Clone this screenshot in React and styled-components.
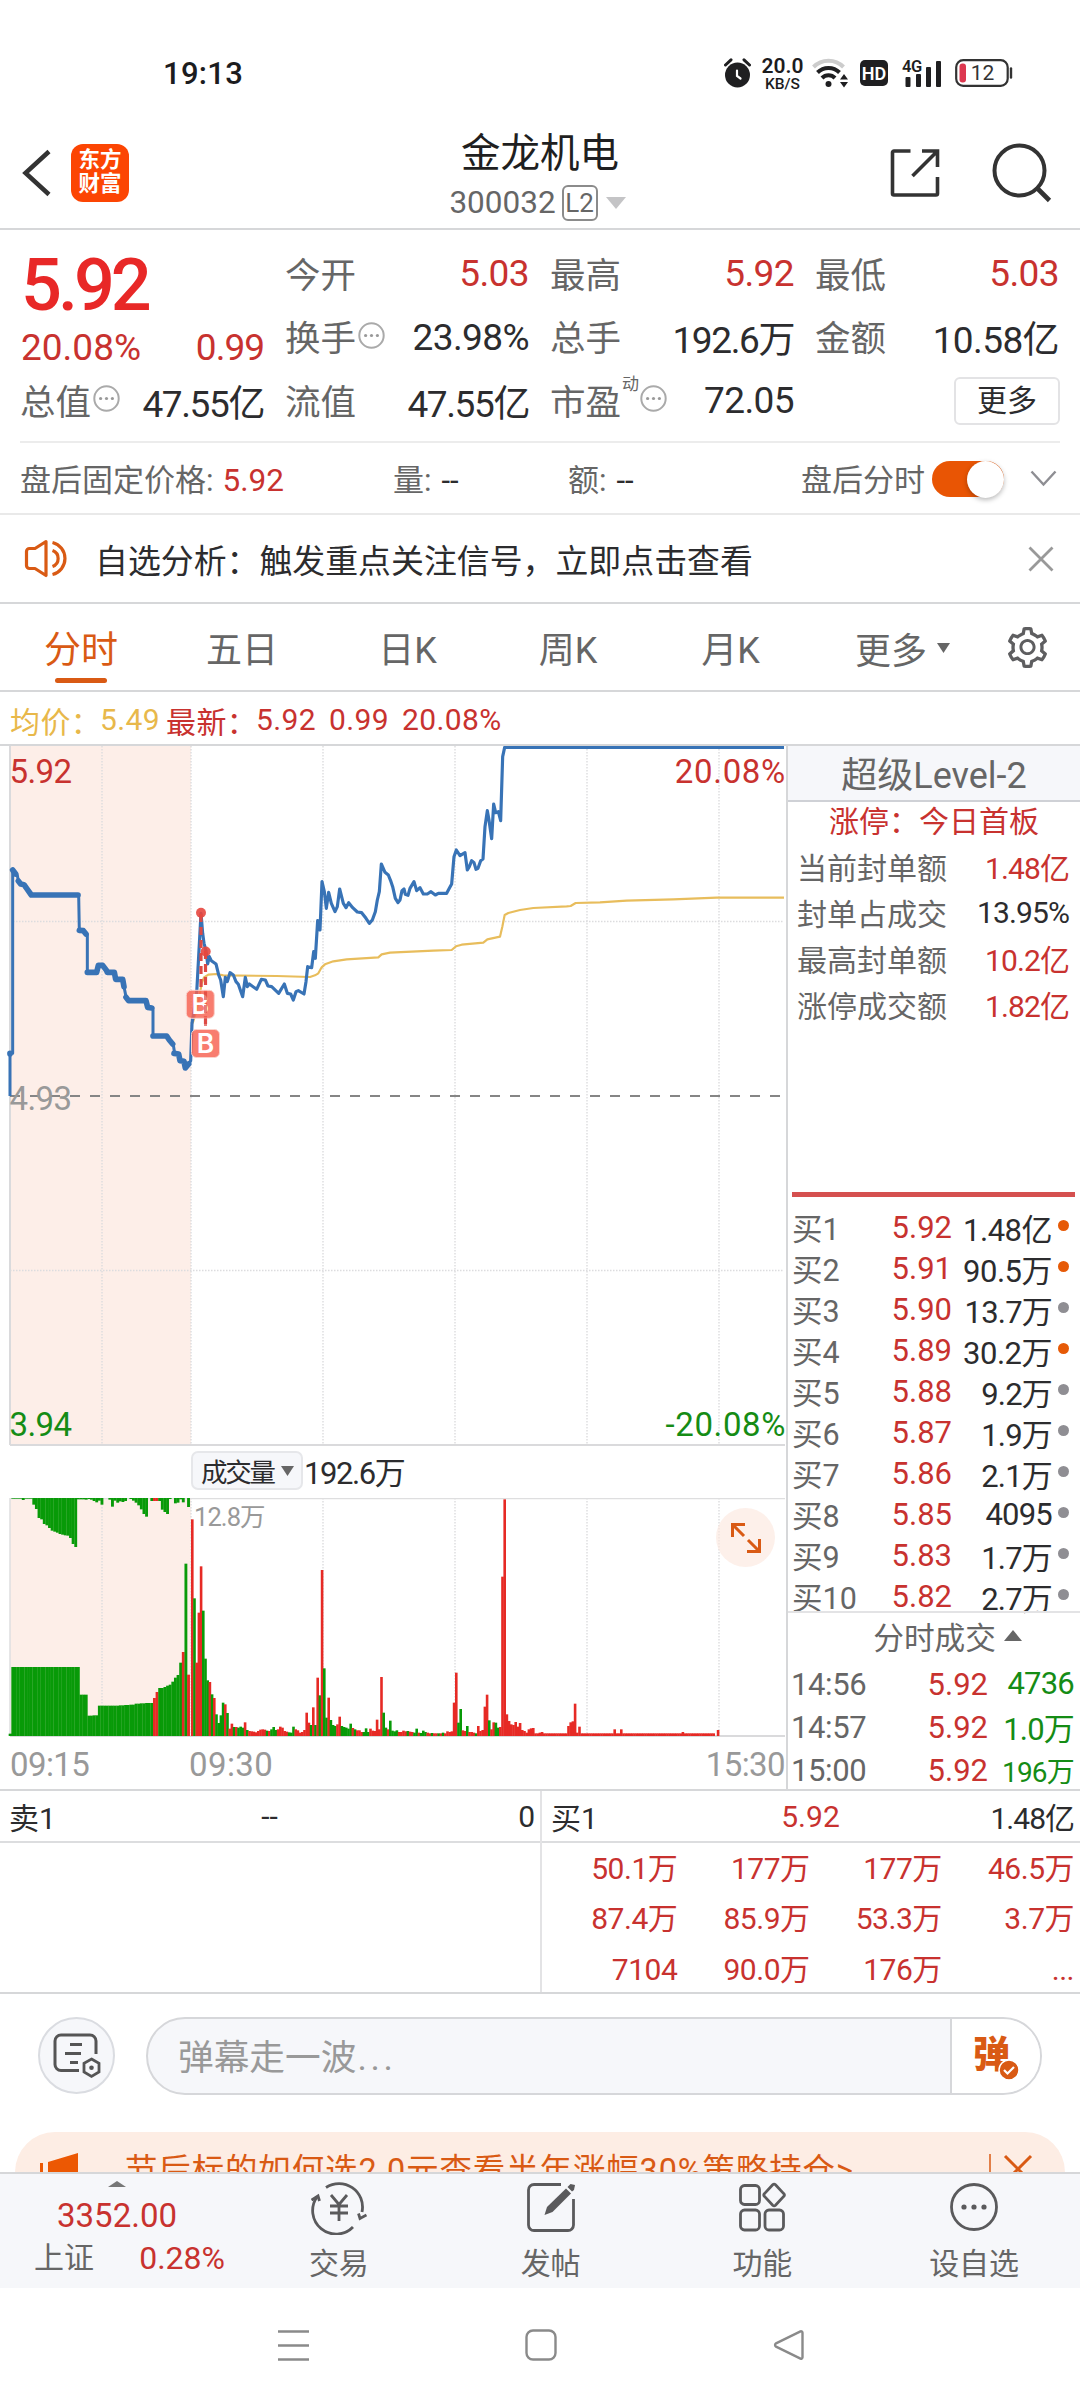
import React from 'react';
import styled, { createGlobalStyle } from 'styled-components';
import { AiOutlineSetting } from 'react-icons/ai';

const RED = '#c8322f';
const GREEN = '#158c15';
const GREY = '#666';
const DARK = '#2c2c2e';
const ORANGE = '#d95a14';
const LINE = '#d6d7d9';

const GlobalStyle = createGlobalStyle`
  * {
    box-sizing: border-box;
  }
  body {
    margin: 0;
    background: #fff;
    font-family: Roboto, 'Noto Sans CJK SC', sans-serif;
    color: ${DARK};
  }
  svg {
    display: block;
    flex-shrink: 0;
  }
`;

const Screen = styled.div`
  width: 1080px;
  height: 2400px;
  overflow: hidden;
  display: flex;
  flex-direction: column;
  > * {
    flex-shrink: 0;
  }
`;

/* status bar */

const StatusBar = styled.div`
  height: 114px;
  padding: 32px 67px 0 163px;
  display: flex;
  align-items: center;
  color: #1c1c1e;
`;

const Clock = styled.span`
  flex: 1;
  font-size: 31px;
  font-weight: 500;
  letter-spacing: 0.3px;
`;

const StatusIcons = styled.div`
  display: flex;
  align-items: center;
`;

const NetSpeed = styled.div`
  width: 45px;
  margin: 2px 7px 0 9px;
  display: flex;
  flex-direction: column;
  align-items: center;
  font-size: 21px;
  line-height: 19px;
  font-weight: 600;
  span {
    font-size: 15.5px;
    line-height: 16px;
    font-weight: 500;
  }
`;

/* header */

const Header = styled.header`
  height: 116px;
  padding: 3px 28px 0 21px;
  display: flex;
  align-items: center;
  border-bottom: 2px solid ${LINE};
`;

const HeaderSide = styled.div`
  width: 190px;
  display: flex;
  align-items: center;
  justify-content: ${({ $end }) => ($end ? 'flex-end' : 'flex-start')};
`;

const Logo = styled.div`
  width: 58px;
  height: 58px;
  margin-left: 19px;
  padding-top: 4px;
  border-radius: 12px;
  background: #fc4503;
  color: #fff;
  font-size: 21.5px;
  line-height: 24.5px;
  font-weight: 700;
  text-align: center;
`;

const TitleBlock = styled.div`
  flex: 1;
  display: flex;
  flex-direction: column;
  align-items: center;
  padding-top: 11px;
`;

const Title = styled.h1`
  margin: 0 0 0 7px;
  font-size: 39.5px;
  line-height: 49px;
  font-weight: 400;
  color: #1f1f21;
`;

const CodeRow = styled.div`
  display: flex;
  align-items: center;
  height: 49px;
  margin-left: 2px;
  font-size: 31.5px;
  color: ${GREY};
`;

const LevelTag = styled.span`
  width: 36px;
  height: 36px;
  margin: 0 8px 0 6px;
  border: 2px solid #8b8b8b;
  border-radius: 6px;
  font-size: 26px;
  line-height: 33px;
  text-align: center;
`;

/* quote */

const Quote = styled.section`
  height: 213px;
  margin: 0 20px;
  padding: 12px 1px 0;
  display: grid;
  grid-template-columns: repeat(4, 243px);
  grid-template-rows: repeat(3, 63.5px);
  column-gap: 22px;
  border-bottom: 2px solid #ececec;
`;

const PriceCell = styled.div`
  grid-row: span 2;
  color: ${RED};
  font-size: 37px;
  b {
    display: block;
    height: 84px;
    line-height: 88px;
    font-size: 72px;
    font-weight: 500;
    letter-spacing: -4px;
    color: #e82827;
  }
  div {
    display: flex;
    justify-content: space-between;
    line-height: 43px;
  }
  span + span {
    letter-spacing: -1px;
  }
`;

const Cell = styled.div`
  display: flex;
  align-items: center;
  font-size: 37px;
  letter-spacing: ${({ $tight }) => ($tight ? -1.4 : -0.6)}px;
  color: ${({ $c }) => $c || DARK};
  label {
    margin: -3px 1px 0 -1px;
    font-size: 35.5px;
    letter-spacing: 0;
    color: ${GREY};
  }
  sup {
    align-self: flex-start;
    margin-top: 5px;
    font-size: 17px;
    line-height: 20px;
    letter-spacing: 0;
    color: ${GREY};
  }
  svg {
    margin: -4px 0 0 1px;
  }
  span {
    flex: 1;
    text-align: right;
    white-space: nowrap;
  }
`;

const MoreButton = styled.button`
  justify-self: end;
  align-self: center;
  width: 106px;
  height: 48px;
  margin: 0 -1px 0 0;
  padding: 0;
  border: 2px solid #e3e3e5;
  border-radius: 6px;
  background: #fff;
  font: inherit;
  font-size: 30px;
  line-height: 42px;
  color: ${DARK};
`;

const AfterHours = styled.div`
  height: 72px;
  padding: 0 22px 0 20px;
  display: flex;
  align-items: center;
  font-size: 31px;
  color: ${GREY};
  border-bottom: 2px solid #e9e9e9;
  em {
    margin-left: 9px;
    font-style: normal;
    font-size: 31.5px;
    color: ${RED};
  }
  i {
    margin-left: 10px;
    font-style: normal;
    color: ${DARK};
  }
`;

const AfterItem = styled.span`
  width: ${({ $w }) => $w}px;
  margin-top: -1px;
  white-space: nowrap;
`;

const Toggle = styled.span`
  width: 72px;
  height: 36px;
  margin: 1px 26px 0 7px;
  border-radius: 18px;
  background: #e95504;
  display: flex;
  justify-content: flex-end;
  &::after {
    content: '';
    width: 37px;
    height: 37px;
    border-radius: 50%;
    background: #fff;
    box-shadow: 0 2px 5px rgba(0, 0, 0, 0.28);
  }
`;

const Notice = styled.div`
  height: 89px;
  padding: 0 26px 0 24px;
  display: flex;
  align-items: center;
  font-size: 32.9px;
  border-bottom: 2px solid ${LINE};
  span {
    flex: 1;
    margin-left: 25px;
  }
`;

/* chart tabs */

const Tabs = styled.nav`
  height: 88px;
  display: flex;
  align-items: center;
  border-bottom: 2px solid ${LINE};
`;

const Tab = styled.div`
  width: ${({ $w }) => $w}px;
  height: 88px;
  padding-top: 15px;
  display: flex;
  flex-direction: column;
  align-items: center;
  font-size: ${({ $on }) => ($on ? 37 : 36)}px;
  line-height: 66px;
  color: ${({ $on }) => ($on ? ORANGE : GREY)};
  &::after {
    content: '';
    width: 52px;
    height: 5px;
    margin-top: -6px;
    border-radius: 3px;
    background: ${({ $on }) => ($on ? ORANGE : 'transparent')};
  }
`;

const MoreTab = styled.div`
  width: 150px;
  padding: 2px 0 0 1px;
  display: flex;
  align-items: center;
  gap: 10px;
  font-size: 36px;
  color: ${GREY};
`;

const Legend = styled.div`
  height: 54px;
  padding: 3px 0 0 10px;
  display: flex;
  align-items: center;
  font-size: 30px;
  border-bottom: 2px solid ${LINE};
`;

const LegendItem = styled.b`
  width: ${({ $w }) => $w}px;
  font-weight: 400;
  letter-spacing: 0.4px;
  white-space: nowrap;
  color: ${({ $c }) => $c || RED};
`;

/* chart and order book */

const Market = styled.div`
  height: 1045px;
  display: flex;
  border-bottom: 2px solid ${LINE};
`;

const ChartColumn = styled.div`
  width: 786px;
  position: relative;
`;

const VolumeHead = styled.div`
  height: 52px;
  padding: 0 0 3px 191px;
  display: flex;
  align-items: center;
  font-size: 31px;
  letter-spacing: -1.4px;
`;

const IndicatorPicker = styled.div`
  width: 112px;
  height: 39px;
  margin-right: 1px;
  padding: 0 7px 0 8px;
  display: flex;
  align-items: center;
  justify-content: space-between;
  border: 2px solid #e6e7ea;
  border-radius: 7px;
  background: #f6f7fa;
  font-size: 26.5px;
  letter-spacing: -2.2px;
`;

const TimeAxis = styled.div`
  display: flex;
  padding: 0 1px 0 10px;
  font-size: 33px;
  line-height: 56px;
  color: #999;
  span:nth-child(1) {
    width: 179px;
    letter-spacing: -0.6px;
  }
  span:nth-child(2) {
    letter-spacing: 0.4px;
  }
  span:nth-child(3) {
    flex: 1;
    letter-spacing: -0.6px;
    text-align: right;
  }
`;

const ExpandButton = styled.div`
  position: absolute;
  left: 716px;
  top: 762px;
  width: 59px;
  height: 59px;
  border-radius: 50%;
  background: rgba(252, 232, 222, 0.65);
  display: flex;
  align-items: center;
  justify-content: center;
`;

const SidePanel = styled.aside`
  flex: 1;
  border-left: 2px solid ${LINE};
  display: flex;
  flex-direction: column;
  > * {
    flex-shrink: 0;
  }
`;

const LevelHead = styled.div`
  height: 56px;
  background: #f6f7fa;
  border-bottom: 2px solid #cfd1d6;
  text-align: center;
  font-size: 36px;
  line-height: 60px;
  color: ${GREY};
`;

const LimitTitle = styled.div`
  height: 41px;
  text-align: center;
  font-size: 30px;
  line-height: 39px;
  color: ${RED};
`;

const LimitRow = styled.div`
  height: 46px;
  padding: 0 11px 0 9px;
  display: flex;
  align-items: center;
  justify-content: space-between;
  font-size: 30px;
  letter-spacing: -0.9px;
  color: ${({ $c }) => $c || RED};
  label {
    margin-top: -1px;
    letter-spacing: 0;
    color: ${GREY};
  }
`;

const RatioBar = styled.div`
  height: 5px;
  margin: 165px 5px 10px 4px;
  background: #d5504f;
`;

const BookRow = styled.div`
  height: 41.05px;
  padding: 0 11px 0 4px;
  display: flex;
  align-items: center;
  font-size: 31px;
  label {
    width: 75px;
    margin-top: -1px;
    font-size: 30.5px;
    color: ${GREY};
  }
  span {
    width: 85px;
    text-align: right;
    color: ${RED};
  }
  b {
    flex: 1;
    margin: -1px -1px 0 0;
    font-weight: 400;
    letter-spacing: ${({ $hot }) => ($hot ? -0.5 : -0.8)}px;
    text-align: right;
    white-space: nowrap;
  }
  &::after {
    content: '';
    width: 11px;
    height: 11px;
    margin: -4px 0 0 7px;
    border-radius: 50%;
    background: ${({ $hot }) => ($hot ? '#e65a07' : '#8f8e93')};
  }
`;

const DealsHead = styled.div`
  height: 51px;
  margin-top: -6px;
  padding: 0 58px 5px 0;
  display: flex;
  align-items: center;
  justify-content: flex-end;
  gap: 8px;
  border-top: 2px solid #e3e3e5;
  font-size: 30.7px;
  color: ${GREY};
`;

const DealRow = styled.div`
  height: 43.2px;
  padding: 0 6px 0 3px;
  display: flex;
  align-items: center;
  font-size: 31px;
  label {
    width: 101px;
    letter-spacing: -0.4px;
    color: ${GREY};
  }
  span {
    width: 96px;
    text-align: right;
    color: ${RED};
  }
  b {
    flex: 1;
    margin-top: -1px;
    font-size: ${({ $small }) => ($small ? 28 : 31)}px;
    font-weight: 400;
    letter-spacing: -0.8px;
    text-align: right;
    color: ${GREEN};
  }
`;

/* order queue */

const Queue = styled.div`
  height: 203px;
  display: flex;
  border-bottom: 2px solid ${LINE};
`;

const QueueSide = styled.div`
  width: 540px;
  & + & {
    border-left: 2px solid #e3e3e5;
  }
`;

const QueueHead = styled.div`
  height: 52px;
  padding: 0 6px 0 9px;
  display: grid;
  grid-template-columns: 174px 1fr 174px;
  align-items: center;
  border-bottom: 2px solid #dcdddf;
  font-size: 30px;
  span {
    padding-right: 4px;
    text-align: center;
    color: ${({ $c }) => $c || DARK};
  }
  b {
    font-weight: 400;
    letter-spacing: -1px;
    text-align: right;
  }
`;

const QueueGrid = styled.div`
  padding: 1px 6px 0 3px;
  display: grid;
  grid-template-columns: repeat(4, 1fr);
  font-size: 30px;
  line-height: 50.4px;
  letter-spacing: -0.5px;
  text-align: right;
  color: ${RED};
`;

/* bullet comments */

const CommentBar = styled.div`
  height: 138px;
  padding: 23px 38px 0;
  display: flex;
  justify-content: space-between;
`;

const RoundButton = styled.div`
  width: 77px;
  height: 77px;
  border: 2px solid #dadce1;
  border-radius: 50%;
  background: #f6f7fa;
  display: flex;
  align-items: center;
  justify-content: center;
`;

const CommentInput = styled.div`
  width: 896px;
  height: 78px;
  display: flex;
  border: 2px solid #d6d7da;
  border-radius: 39px;
  overflow: hidden;
  background: #f6f7fa;
  font-size: 35.7px;
  line-height: 78px;
  color: #999;
  p {
    flex: 1;
    margin: 0;
    padding-left: 30px;
  }
  span {
    margin-left: 1px;
    letter-spacing: 3.6px;
  }
`;

const BulletToggle = styled.div`
  position: relative;
  width: 90px;
  padding-left: 21px;
  border-left: 2px solid #d6d7da;
  background: #fff;
  font-size: 37px;
  line-height: 74px;
  font-weight: 900;
  color: ${ORANGE};
  svg {
    position: absolute;
    left: 46px;
    top: 40px;
  }
`;

const Banner = styled.div`
  height: 40px;
  margin: 0 15px;
  padding: 16px 32px 0 25px;
  overflow: hidden;
  border-radius: 40px 40px 0 0;
  background: #fdede4;
  display: flex;
  align-items: flex-start;
  font-size: 32.4px;
  line-height: 47px;
  letter-spacing: 0.95px;
  color: ${ORANGE};
  p {
    flex: 1;
    margin: 0 0 0 45px;
    white-space: nowrap;
  }
`;

/* bottom bars */

const BottomBar = styled.footer`
  height: 116px;
  display: flex;
  border-top: 2px solid ${LINE};
  background: #f6f7fa;
`;

const IndexBox = styled.div`
  width: 233px;
  padding: 7px 8px 0 34px;
  color: ${RED};
  font-size: 33px;
  > svg {
    margin-left: 74px;
  }
  > div {
    padding-left: 23px;
    margin-top: 8px;
    line-height: 42px;
  }
  p {
    margin: 0;
    display: flex;
    justify-content: space-between;
    font-size: 32px;
    line-height: 42px;
  }
  label {
    font-size: 30px;
    color: ${GREY};
  }
`;

const BarItem = styled.div`
  flex: 1;
  padding-top: 5px;
  display: flex;
  flex-direction: column;
  align-items: center;
  font-size: 30px;
  line-height: 57px;
  color: ${GREY};
`;

const SystemNav = styled.div`
  height: 113px;
  padding: 0 276px 0 278px;
  display: flex;
  align-items: center;
  justify-content: space-between;
`;

/* data, in thirds of a pixel of the plot area */

const AUCTION_LINE =
  '30,1068 30,940 38,940 38,390 45,400 52,406 55,423 62,432 72,434 82,448 94,465 236,465 238,572 250,572 262,585 262,697 290,697 295,676 308,676 322,697 343,697 347,718 368,718 372,740 378,770 386,782 438,782 443,802 459,804 459,888 500,888 508,900 520,915 524,940 536,942 540,962 552,964 556,984 566,972';

const AUCTION_BOLD = [
  '38,390 47,402',
  '55,423 62,432 72,434 82,448 94,465 234,465',
  '238,571 250,572 258,582',
  '262,697 290,697 295,676 308,676 320,692 322,697 343,697 347,718 368,718 372,740',
  '378,772 386,782 438,782 443,802 455,804',
  '459,888 500,888 508,900 518,912',
  '522,940 536,942 540,962 552,964 556,984 566,972',
  '30,940 30,941',
];

const PRICE_LINE =
  '566,972 572,962 576,850 590,760 603,520 608,580 612,610 618,632 623,672 628,650 634,662 648,672 656,705 662,720 670,770 676,712 682,725 690,698 700,705 708,725 715,733 728,770 736,712 742,740 748,732 770,748 784,718 796,720 804,738 815,740 836,760 853,732 862,760 872,762 880,780 888,755 895,752 912,762 918,725 923,680 935,683 941,635 946,655 953,542 960,570 966,425 973,455 979,505 986,457 994,490 1005,515 1012,500 1019,447 1030,490 1038,503 1046,488 1058,503 1072,516 1085,518 1098,535 1108,550 1117,540 1126,515 1132,480 1138,455 1144,372 1155,397 1165,405 1173,425 1178,440 1186,475 1194,488 1200,480 1206,452 1212,447 1216,463 1224,466 1230,445 1242,425 1250,452 1260,443 1270,462 1282,462 1293,455 1306,465 1315,460 1340,460 1348,445 1355,432 1362,350 1369,330 1380,347 1395,338 1402,390 1408,380 1415,362 1422,368 1428,388 1434,385 1442,362 1449,357 1455,260 1462,212 1467,240 1475,296 1481,192 1487,218 1495,215 1502,242 1508,50 1514,22 2352,22';

const AVERAGE_LINE =
  '578,850 590,810 600,760 605,730 612,712 625,704 650,702 670,706 830,708 930,711 945,706 955,700 965,682 975,673 1000,664 1040,658 1135,652 1145,643 1170,638 1300,632 1355,630 1368,619 1385,614 1450,608 1462,598 1500,590 1507,560 1514,525 1525,519 1560,510 1600,504 1700,499 1712,498 1727,489 1800,487 1880,482 2020,478 2150,473 2352,473';

// positive = red, negative = green
const UNMATCHED = [
  -2, -2, -2, -2, -6, -2, -2, -2, -20, -33, -60, -64, -78, -82, -90, -98, -101, -104, -108, -110,
  -112, -113, -120, -138, -147, -4, -4, -4, -5, -3, -5, -9, -13, -8, -20, 0, 0, -5, -26, -8,
  -14, -10, -12, -9, 0, -3, -8, -14, -22, -34, -48, -56, 0, -9, 9, 9, -9, -35, -42, -48,
  -3, 0, -16, -14, -4, -13, 0, -27,
];

const MATCHED = [
  ...Array(26).fill(-207), -124, -124, -124, -61, -61, -62, -62,
  ...Array(8).fill(-91), -92, -92, -93, -93, -94, -94, -97, -97, -98, -98, -99, -99, -99,
  114, 132, -144, -144, -147, -151, -154, -163, -175, -183, -220, 252, -517, 184,
];

const VOLUME = [
  650, -413, 220, 370, 509, -376, -232, -167, 162, -125, 114, -65, -39, -62, -100, 95, -69, 22, 37, -27,
  27, -25, -28, -25, 41, -18, 15, 14, 13, 11, 15, 19, 20, 19, -16, 15, -20, -27, -18, 20,
  28, 25, 15, 13, -11, -10, -28, 20, 17, 10, 12, 18, 70, 40, -33, 86, -33, 175, -122, 498,
  -203, -55, 115, -48, -33, -30, 35, 58, -30, -27, -25, -22, -37, 24, -20, 17, 17, 12, -12, -23,
  -12, 22, 16, 15, 49, 20, 177, -70, -25, 20, -46, -16, -14, -17, 12, 12, 16, 14, -15, 13,
  12, -10, -22, 10, -9, -16, -12, 10, 8, -9, 8, 8, -8, 8, -10, 8, 14, 12, 14, 100,
  190, -40, -81, 17, 15, -30, 12, 12, 10, -8, 30, 15, 18, 88, 124, -47, 20, 41, -40, -25,
  27, 478, 710, 65, 45, 35, 33, 42, 28, 39, 18, 15, 10, 20, 23, 24, 8, 8, 10, 12,
  8, 8, 8, 8, 8, 8, 8, 8, 8, 8, 8, 30, 41, 44, 97, 10, 28,
];

const LATE_SPIKES = { 192: 20, 195: 20, 223: 12, 238: 0, 239: 18 };

const minuteVolume = Array.from({ length: 240 }, (_, i) => VOLUME[i] ?? LATE_SPIKES[i] ?? 8);

const GRID_X = [102, 191, 323, 455, 587, 719];

const QUOTES = [
  { label: '今开', value: '5.03', color: RED },
  { label: '最高', value: '5.92', color: RED },
  { label: '最低', value: '5.03', color: RED },
  { label: '换手', value: '23.98%', hint: true },
  { label: '总手', value: '192.6万', tight: true },
  { label: '金额', value: '10.58亿' },
  { label: '总值', value: '47.55亿', hint: true, tight: true },
  { label: '流值', value: '47.55亿', tight: true },
  { label: '市盈', value: '72.05', sup: '动', hint: true },
];

const LIMITS = [
  ['当前封单额', '1.48亿'],
  ['封单占成交', '13.95%', DARK],
  ['最高封单额', '10.2亿'],
  ['涨停成交额', '1.82亿'],
];

const BOOK = [
  ['5.92', '1.48亿', true],
  ['5.91', '90.5万', true],
  ['5.90', '13.7万'],
  ['5.89', '30.2万', true],
  ['5.88', '9.2万'],
  ['5.87', '1.9万'],
  ['5.86', '2.1万'],
  ['5.85', '4095'],
  ['5.83', '1.7万'],
  ['5.82', '2.7万'],
];

const DEALS = [
  ['14:56', '5.92', '4736'],
  ['14:57', '5.92', '1.0万'],
  ['15:00', '5.92', '196万', true],
];

const QUEUE = [
  '50.1万', '177万', '177万', '46.5万',
  '87.4万', '85.9万', '53.3万', '3.7万',
  '7104', '90.0万', '176万', '...',
];

/* small drawings */

const Triangle = ({ w, h, color, up }) => (
  <svg width={w} height={h} viewBox="0 0 10 10" preserveAspectRatio="none">
    <path d={up ? 'M0 10L5 0l5 10z' : 'M0 0h10L5 10z'} fill={color} />
  </svg>
);

const Hint = () => (
  <svg width="27" height="27" viewBox="0 0 27 27">
    <circle cx="13.5" cy="13.5" r="12.2" fill="none" stroke="#aaa" strokeWidth="2" />
    <g fill="#999">
      <circle cx="7.6" cy="13.5" r="1.6" />
      <circle cx="13.5" cy="13.5" r="1.6" />
      <circle cx="19.4" cy="13.5" r="1.6" />
    </g>
  </svg>
);

const AlarmIcon = () => (
  <svg width="27" height="30" viewBox="0 0 27 30">
    <circle cx="13.5" cy="17" r="12.5" fill="#1f1f21" />
    <path d="M1.5 7L7 1.8M25.5 7L20 1.8" stroke="#1f1f21" strokeWidth="3" strokeLinecap="round" />
    <path d="M13 12.5v5.5l3.5 2.5" fill="none" stroke="#fff" strokeWidth="2.2" strokeLinecap="round" />
  </svg>
);

const WifiIcon = () => (
  <svg width="37" height="30" viewBox="0 0 37 30" fill="none" strokeWidth="4">
    <path d="M1.5 9a21 21 0 0 1 30 0" stroke="#ccc" />
    <path d="M5.5 14.5a15.5 15.5 0 0 1 22 0" stroke="#1f1f21" />
    <path d="M10 20a9 9 0 0 1 13 0" stroke="#1f1f21" />
    <circle cx="16.5" cy="26" r="3" fill="#1f1f21" stroke="none" />
    <path d="M28 21.5l4-5.5 4 5.5zM28 24l4 5.5 4-5.5z" fill="#1f1f21" stroke="none" />
  </svg>
);

const HdIcon = () => (
  <svg width="28" height="26" viewBox="0 0 28 26">
    <rect width="28" height="26" rx="5" fill="#1f1f21" />
    <text x="14" y="19.5" fontSize="18" fontWeight="600" fill="#fff" textAnchor="middle">HD</text>
  </svg>
);

const SignalIcon = () => (
  <svg width="40" height="30" viewBox="0 0 40 30" fill="#1f1f21">
    <text x="0" y="13.5" fontSize="16.5" fontWeight="600" letterSpacing="-0.5">4G</text>
    <rect x="3.5" y="19" width="5" height="10" rx="1" />
    <rect x="14" y="16" width="5" height="13" rx="1" />
    <rect x="24" y="9" width="5" height="20" rx="1" />
    <rect x="34" y="3" width="5" height="26" rx="1" />
  </svg>
);

const BatteryIcon = () => (
  <svg width="58" height="28" viewBox="0 0 58 28">
    <rect x="1.2" y="1.2" width="51.5" height="25.6" rx="7" fill="none" stroke="#333" strokeWidth="2.2" />
    <rect x="4.5" y="4.5" width="6.5" height="19" rx="3" fill="#dd3850" />
    <path d="M56 9.5v9" stroke="#333" strokeWidth="2.4" strokeLinecap="round" />
    <text x="27.5" y="21.3" fontSize="21" fill="#333" textAnchor="middle">12</text>
  </svg>
);

const BackIcon = () => (
  <svg width="31" height="48" viewBox="0 0 31 48">
    <path d="M28 2.5L4.5 24 28 45.5" fill="none" stroke="#333" strokeWidth="4.5" />
  </svg>
);

const ShareIcon = () => (
  <svg width="50" height="50" viewBox="0 0 50 50" fill="none" stroke="#333" strokeWidth="3.6">
    <path d="M20.5 3H4a1.5 1.5 0 0 0-1.5 1.5v41A1.5 1.5 0 0 0 4 47h42a1.5 1.5 0 0 0 1.5-1.5V29" />
    <path d="M22.5 28L47 3.5M32 3h15.5v16" />
  </svg>
);

const SearchIcon = () => (
  <svg width="60" height="60" viewBox="0 0 60 60" fill="none" stroke="#333" strokeWidth="4">
    <circle cx="27.5" cy="27.5" r="25" />
    <path d="M45 45l12.5 12.5" strokeWidth="4.6" />
  </svg>
);

const SpeakerIcon = () => (
  <svg width="46" height="40" viewBox="0 0 46 40" fill="none" stroke={ORANGE} strokeWidth="3.2">
    <path d="M22 2.5L11 9.5H5.5a3 3 0 0 0-3 3v14a3 3 0 0 0 3 3H11l11 7z" strokeLinejoin="round" />
    <path d="M28.5 11.5a8.5 8.5 0 0 1 0 16M28.5 3.5a16.5 16.5 0 0 1 0 32" />
  </svg>
);

const CrossIcon = ({ size, color }) => (
  <svg width={size} height={size} viewBox="0 0 26 26">
    <path d="M1.5 1.5l23 23M24.5 1.5l-23 23" stroke={color} strokeWidth="2.8" />
  </svg>
);

const ExpandIcon = () => (
  <svg width="30" height="30" viewBox="0 0 30 30" fill="none" stroke={ORANGE} strokeWidth="3">
    <path d="M1.5 14V1.5H14M2 2l11 11M28.5 16v12.5H16M28 28L17 17" />
  </svg>
);

const BulletSettingsIcon = () => (
  <svg width="48" height="46" viewBox="0 0 48 46" fill="none" stroke="#555" strokeWidth="3">
    <path d="M26 37.5H8a6 6 0 0 1-6-6V8a6 6 0 0 1 6-6h29a6 6 0 0 1 6 6v13" />
    <path d="M17 11.5h12M12 20.5h16M17 29.5h8" />
    <path d="M38.5 26l7.5 4.4v8.6l-7.5 4.4-7.5-4.4v-8.6z" strokeWidth="2.8" />
    <circle cx="38.5" cy="34.7" r="2.3" fill="#555" stroke="none" />
  </svg>
);

const MegaphoneIcon = () => (
  <svg width="40" height="36" viewBox="0 0 40 36" fill="#ec5803">
    <path d="M0 15h3v20H0zM8 14L38 5v31H8z" />
  </svg>
);

const barIcon = { width: 56, height: 56, viewBox: '0 0 56 56', fill: 'none', stroke: '#5a5a5c', strokeWidth: 2.8 };

const TradeIcon = () => (
  <svg {...barIcon}>
    <path d="M15 8.5A23.5 23.5 0 0 1 51 33M42 48A23.5 23.5 0 0 1 6 18" />
    <path d="M0.5 21L7 17l1.500 5M55.500 36l-6.500 3.500-1.500-5" />
    <path d="M20 16l8 9.5 8-9.5M28 25.5V42M19 27h18M19 34h18" />
  </svg>
);

const PostIcon = () => (
  <svg {...barIcon}>
    <path d="M38 5.5H11A5.5 5.5 0 0 0 5.5 11v35a5.5 5.5 0 0 0 5.5 5.5h34a5.5 5.5 0 0 0 5.5-5.5V20" />
    <path d="M21.5 36l2.5-8L43 9.5l5 5L29.5 33z" fill="#5a5a5c" stroke="none" />
    <path d="M44.5 8l3-3 4.500 1-1 5-2 1.5z" fill="#5a5a5c" stroke="none" />
  </svg>
);

const FunctionIcon = () => (
  <svg {...barIcon}>
    <rect x="6.5" y="6.5" width="19" height="19" rx="4" />
    <rect x="6.5" y="31" width="19" height="20" rx="4" />
    <rect x="31" y="31" width="18.5" height="20" rx="4" />
    <path d="M38.7 5.8a2 2 0 0 1 2.8 0l8.2 8.8a2 2 0 0 1 0 2.8l-8.2 8.8a2 2 0 0 1-2.8 0l-8.2-8.8a2 2 0 0 1 0-2.8z" />
  </svg>
);

const WatchIcon = () => (
  <svg {...barIcon}>
    <circle cx="28" cy="28" r="22.5" />
    <g fill="#5a5a5c" stroke="none">
      <circle cx="18" cy="28" r="2.6" />
      <circle cx="28" cy="28" r="2.6" />
      <circle cx="38" cy="28" r="2.6" />
    </g>
  </svg>
);

/* charts */

const BuyMark = ({ x, y }) => (
  <g>
    <rect x={x - 14} y={y - 14} width="28" height="28" rx="5" fill="#f6604f" fillOpacity="0.82" stroke="#fbd3cc" strokeWidth="1" />
    <text x={x} y={y + 9.5} fontSize="26.5" fontWeight="600" fill="#fff" textAnchor="middle" fontFamily="Inter, sans-serif">B</text>
  </g>
);

const PriceChart = () => (
  <svg width="786" height="700" viewBox="0 746 786 700">
    <rect x="10" y="746" width="181" height="699" fill="#fdeee8" />
    <g stroke="#dcdcde" strokeWidth="1.4" strokeDasharray="1.5 1.5">
      {GRID_X.map((x) => <path key={x} d={`M${x} 746V1444`} />)}
      <path d="M10 921.5H784M10 1270.5H784" />
    </g>
    <path d="M10 746V1445" stroke="#dadadc" strokeWidth="2" />
    <path d="M10 1445H785" stroke="#dadadc" strokeWidth="2" />
    <path d="M10 1096H784" stroke="#858585" strokeWidth="2" strokeDasharray="10 10" />
    <g fontSize="33">
      <text x="9.5" y="782.5" fill={RED} letterSpacing="-0.6">5.92</text>
      <text x="786" y="782.5" fill={RED} textAnchor="end" letterSpacing="0.7">20.08%</text>
      <text x="9.5" y="1109.5" fill="#999" letterSpacing="-0.6">4.93</text>
      <text x="9.5" y="1436" fill={GREEN} letterSpacing="-0.6">3.94</text>
      <text x="786" y="1436" fill={GREEN} textAnchor="end" letterSpacing="0.6">-20.08%</text>
    </g>
    <g transform="translate(0 740) scale(0.33333)" fill="none" strokeLinejoin="round">
      <polyline points={AVERAGE_LINE} stroke="#e8bd5c" strokeWidth="6.5" />
      <polyline points={AUCTION_LINE} stroke="#3873b6" strokeWidth="9" />
      <polyline points={PRICE_LINE} stroke="#3873b6" strokeWidth="9.5" />
      {AUCTION_BOLD.map((p) => (
        <polyline key={p} points={p} stroke="#3873b6" strokeWidth="17" strokeLinecap="round" />
      ))}
    </g>
    <g stroke="#dd4a44" strokeWidth="3.2" strokeDasharray="8 5">
      <path d="M201 914V990" />
      <path d="M205.5 951V1029" />
    </g>
    <circle cx="201" cy="912.7" r="5" fill="#e7473f" fillOpacity="0.9" />
    <circle cx="205.7" cy="951.5" r="5" fill="#e7473f" fillOpacity="0.9" />
    <BuyMark x={200.3} y={1004.3} />
    <path d="M205.5 992V1028" stroke="#dd4a44" strokeWidth="3" strokeDasharray="8 5" strokeOpacity="0.7" />
    <BuyMark x={205.5} y={1043.5} />
  </svg>
);

const fillOf = (v) => (v > 0 ? '#e62a25' : '#089a08');

const VolumeChart = () => (
  <svg width="786" height="239" viewBox="0 1498 786 239">
    <rect x="10" y="1498" width="181" height="238" fill="#fdeee8" />
    <g stroke="#dcdcde" strokeWidth="1.4" strokeDasharray="1.5 1.5">
      {GRID_X.map((x) => <path key={x} d={`M${x} 1498V1736`} />)}
    </g>
    <path d="M10 1498V1736M10 1498.5H785" stroke="#dededf" strokeWidth="1.5" />
    <path d="M10 1736H785" stroke="#dadadc" strokeWidth="2" />
    <text x="194" y="1526" fontSize="25.5" fill="#999" letterSpacing="-0.9">12.8万</text>
    <g transform="translate(0 1400) scale(0.33333)">
      {UNMATCHED.map((v, i) => (
        <rect key={i} x={34 + i * 7.87} y="294" width="8.6" height={Math.abs(v)} fill={fillOf(v)} />
      ))}
      {MATCHED.map((v, i) => (
        <rect key={i} x={34 + i * 7.87} y={1008 - Math.abs(v)} width="8.6" height={Math.abs(v)} fill={fillOf(v)} />
      ))}
      {minuteVolume.map((v, i) => (
        <rect key={i} x={573 + i * 6.6} y={1008 - Math.abs(v)} width="7.8" height={Math.abs(v)} fill={fillOf(v)} />
      ))}
      <rect x="26" y="1001" width="14" height="7" fill="#089a08" />
    </g>
  </svg>
);

const Gap = styled.div`
  width: ${({ $w }) => $w}px;
`;

const App = () => {
  return (
    <Screen>
      <GlobalStyle />

      <StatusBar>
        <Clock>19:13</Clock>
        <StatusIcons>
          <AlarmIcon />
          <NetSpeed>20.0<span>KB/S</span></NetSpeed>
          <WifiIcon />
          <Gap $w={11} />
          <HdIcon />
          <Gap $w={14} />
          <SignalIcon />
          <Gap $w={13} />
          <BatteryIcon />
        </StatusIcons>
      </StatusBar>

      <Header>
        <HeaderSide>
          <BackIcon />
          <Logo>东方<br />财富</Logo>
        </HeaderSide>
        <TitleBlock>
          <Title>金龙机电</Title>
          <CodeRow>
            300032
            <LevelTag>L2</LevelTag>
            <Triangle w={20} h={12} color="#c4c4c6" />
          </CodeRow>
        </TitleBlock>
        <HeaderSide $end>
          <ShareIcon />
          <Gap $w={52} />
          <SearchIcon />
        </HeaderSide>
      </Header>

      <Quote>
        <PriceCell>
          <b>5.92</b>
          <div><span>20.08%</span><span>0.99</span></div>
        </PriceCell>
        {QUOTES.map((q) => (
          <Cell key={q.label} $c={q.color} $tight={q.tight}>
            <label>{q.label}</label>
            {q.sup && <sup>{q.sup}</sup>}
            {q.hint && <Hint />}
            <span>{q.value}</span>
          </Cell>
        ))}
        <MoreButton>更多</MoreButton>
      </Quote>

      <AfterHours>
        <AfterItem $w={373}>盘后固定价格:<em>5.92</em></AfterItem>
        <AfterItem $w={175}>量:<i>--</i></AfterItem>
        <AfterItem $w={233}>额:<i>--</i></AfterItem>
        <AfterItem>盘后分时</AfterItem>
        <Toggle />
        <svg width="27" height="17" viewBox="0 0 27 17">
          <path d="M1.5 1.5l12 13 12-13" fill="none" stroke="#8e8e93" strokeWidth="2.4" />
        </svg>
      </AfterHours>

      <Notice>
        <SpeakerIcon />
        <span>自选分析：触发重点关注信号，立即点击查看</span>
        <CrossIcon size={26} color="#999" />
      </Notice>

      <Tabs>
        <Tab $w={162} $on>分时</Tab>
        <Tab $w={160}>五日</Tab>
        <Tab $w={171}>日K</Tab>
        <Tab $w={150}>周K</Tab>
        <Tab $w={175}>月K</Tab>
        <Gap $w={36} />
        <MoreTab>更多<Triangle w={13} h={10} color={GREY} /></MoreTab>
        <AiOutlineSetting size={47} color="#5e5e60" />
      </Tabs>

      <Legend>
        <LegendItem $w={90} $c="#e8b84a">均价：</LegendItem>
        <LegendItem $w={66} $c="#e8b84a">5.49</LegendItem>
        <LegendItem $w={90}>最新：</LegendItem>
        <LegendItem $w={73}>5.92</LegendItem>
        <LegendItem $w={73}>0.99</LegendItem>
        <LegendItem>20.08%</LegendItem>
      </Legend>

      <Market>
        <ChartColumn>
          <PriceChart />
          <VolumeHead>
            <IndicatorPicker>成交量<Triangle w={13} h={10} color={GREY} /></IndicatorPicker>
            192.6万
          </VolumeHead>
          <VolumeChart />
          <TimeAxis>
            <span>09:15</span>
            <span>09:30</span>
            <span>15:30</span>
          </TimeAxis>
          <ExpandButton><ExpandIcon /></ExpandButton>
        </ChartColumn>
        <SidePanel>
          <LevelHead>超级Level-2</LevelHead>
          <LimitTitle>涨停：今日首板</LimitTitle>
          {LIMITS.map(([label, value, color]) => (
            <LimitRow key={label} $c={color}><label>{label}</label>{value}</LimitRow>
          ))}
          <RatioBar />
          {BOOK.map(([price, amount, hot], i) => (
            <BookRow key={price} $hot={hot}>
              <label>买{i + 1}</label>
              <span>{price}</span>
              <b>{amount}</b>
            </BookRow>
          ))}
          <DealsHead>分时成交<Triangle w={18} h={11} color={GREY} up /></DealsHead>
          {DEALS.map(([time, price, amount, small]) => (
            <DealRow key={time} $small={small}>
              <label>{time}</label>
              <span>{price}</span>
              <b>{amount}</b>
            </DealRow>
          ))}
        </SidePanel>
      </Market>

      <Queue>
        <QueueSide>
          <QueueHead>卖1<span>--</span><b>0</b></QueueHead>
        </QueueSide>
        <QueueSide>
          <QueueHead $c={RED}>买1<span>5.92</span><b>1.48亿</b></QueueHead>
          <QueueGrid>
            {QUEUE.map((v, i) => <span key={i}>{v}</span>)}
          </QueueGrid>
        </QueueSide>
      </Queue>

      <CommentBar>
        <RoundButton><BulletSettingsIcon /></RoundButton>
        <CommentInput>
          <p>弹幕走一波<span>...</span></p>
          <BulletToggle>
            弹
            <svg width="22" height="22" viewBox="0 0 22 22">
              <circle cx="11" cy="11" r="10" fill={ORANGE} stroke="#fff" strokeWidth="1.5" />
              <path d="M6 11l3.5 3.5L16 8" fill="none" stroke="#fff" strokeWidth="2.2" />
            </svg>
          </BulletToggle>
        </CommentInput>
      </CommentBar>

      <Banner>
        <MegaphoneIcon />
        <p>节后标的如何选2.0元查看半年涨幅30%策略持仓&gt;</p>
        <svg width="44" height="34" viewBox="0 0 44 34" fill="none" stroke={ORANGE}>
          <path d="M1 6v28" strokeWidth="1.5" />
          <path d="M16 8l26 26M42 8L16 34" strokeWidth="3" />
        </svg>
      </Banner>

      <BottomBar>
        <IndexBox>
          <Triangle w={18} h={6} color="#777" up />
          <div>3352.00</div>
          <p><label>上证</label>0.28%</p>
        </IndexBox>
        <BarItem><TradeIcon />交易</BarItem>
        <BarItem><PostIcon />发帖</BarItem>
        <BarItem><FunctionIcon />功能</BarItem>
        <BarItem><WatchIcon />设自选</BarItem>
      </BottomBar>

      <SystemNav>
        <svg width="31" height="32" viewBox="0 0 31 32" stroke="#8a8a8a" strokeWidth="2.6">
          <path d="M0 2.5h31M0 16.5h31M0 30.5h31" />
        </svg>
        <svg width="32" height="32" viewBox="0 0 32 32" fill="none" stroke="#8a8a8a" strokeWidth="2.4">
          <rect x="1.5" y="1.5" width="29" height="29" rx="6.5" />
        </svg>
        <svg width="31" height="32" viewBox="0 0 31 32" fill="none" stroke="#8a8a8a" strokeWidth="2.4">
          <path d="M27.5 2.3L3 14.3a2 2 0 0 0 0 3.4l24.5 12a1.5 1.5 0 0 0 2-1.4V3.7a1.5 1.5 0 0 0-2-1.4z" strokeLinejoin="round" />
        </svg>
      </SystemNav>
    </Screen>
  );
};

export default App;
